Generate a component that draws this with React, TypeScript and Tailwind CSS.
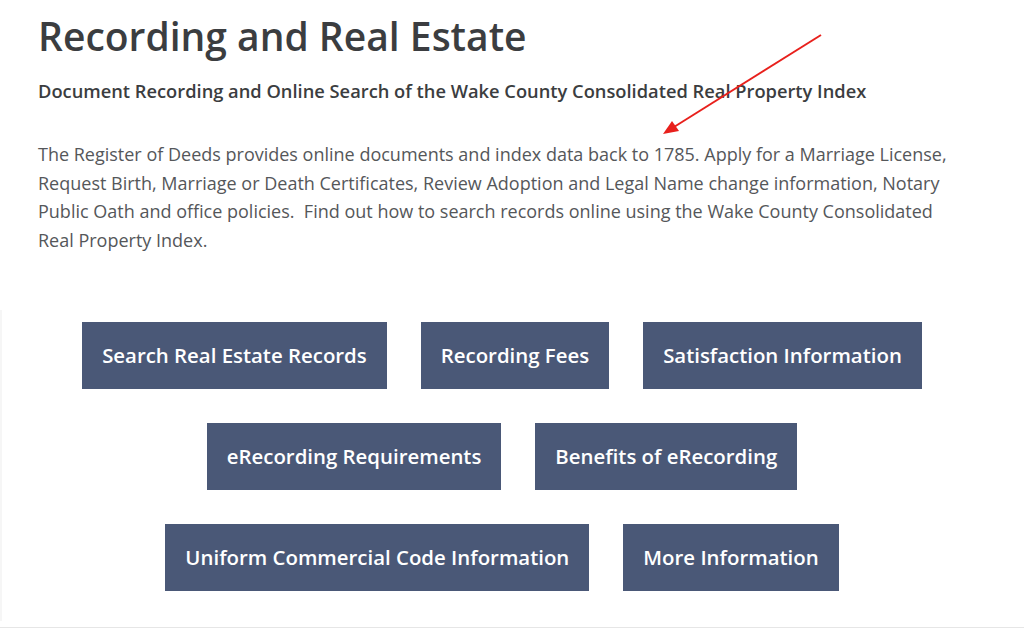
const links = [
  ["Search Real Estate Records", "Recording Fees", "Satisfaction Information"],
  ["eRecording Requirements", "Benefits of eRecording"],
  ["Uniform Commercial Code Information", "More Information"],
];

function LinkButton({ label }: { label: string }) {
  return (
    <a
      href="#"
      className="flex h-[67px] items-center bg-[#4a5877] px-[20px] text-[20.4px] font-semibold text-white"
    >
      {label}
    </a>
  );
}

export default function App() {
  return (
    <div
      className="relative min-h-[629px] bg-white"
      style={{ fontFamily: '"Open Sans", "Liberation Sans", sans-serif' }}
    >
      <div className="px-[38px] pt-[10px]">
        <h1 className="text-[39px] font-semibold leading-[52px] text-[#3b3d40]">
          Recording and Real Estate
        </h1>
        <h2 className="mt-[16px] text-[18.3px] font-semibold leading-[26px] text-[#3b3d40]">
          Document Recording and Online Search of the Wake County Consolidated Real Property Index
        </h2>
        <p className="mt-[36px] w-[920px] text-[18px] leading-[28.7px] text-[#55575a]">
          The Register of Deeds provides online documents and index data back to 1785. Apply for a
          Marriage License, Request Birth, Marriage or Death Certificates, Review Adoption and Legal
          Name change information, Notary Public Oath and office policies.&nbsp; Find out how to
          search records online using the Wake County Consolidated Real Property Index.
        </p>
      </div>

      <section className="mt-[55px] flex w-[1002px] flex-col items-center gap-[34px] border-l-2 border-[#f6f6f6] pb-[30px] pt-[12px]">
        {links.map((row, i) => (
          <div key={i} className="flex justify-center gap-[34px]">
            {row.map((label) => (
              <LinkButton key={label} label={label} />
            ))}
          </div>
        ))}
      </section>

      <div className="absolute bottom-[1px] left-0 right-0 h-px bg-[#e6e6e6]" />

      {/* red callout arrow */}
      <svg
        className="pointer-events-none absolute left-0 top-0"
        width="1024"
        height="629"
        viewBox="0 0 1024 629"
      >
        <line x1="821" y1="35" x2="674" y2="127" stroke="#e8201c" strokeWidth="2" />
        <polygon points="663,134 672,121 679,131" fill="#e8201c" />
      </svg>
    </div>
  );
}
